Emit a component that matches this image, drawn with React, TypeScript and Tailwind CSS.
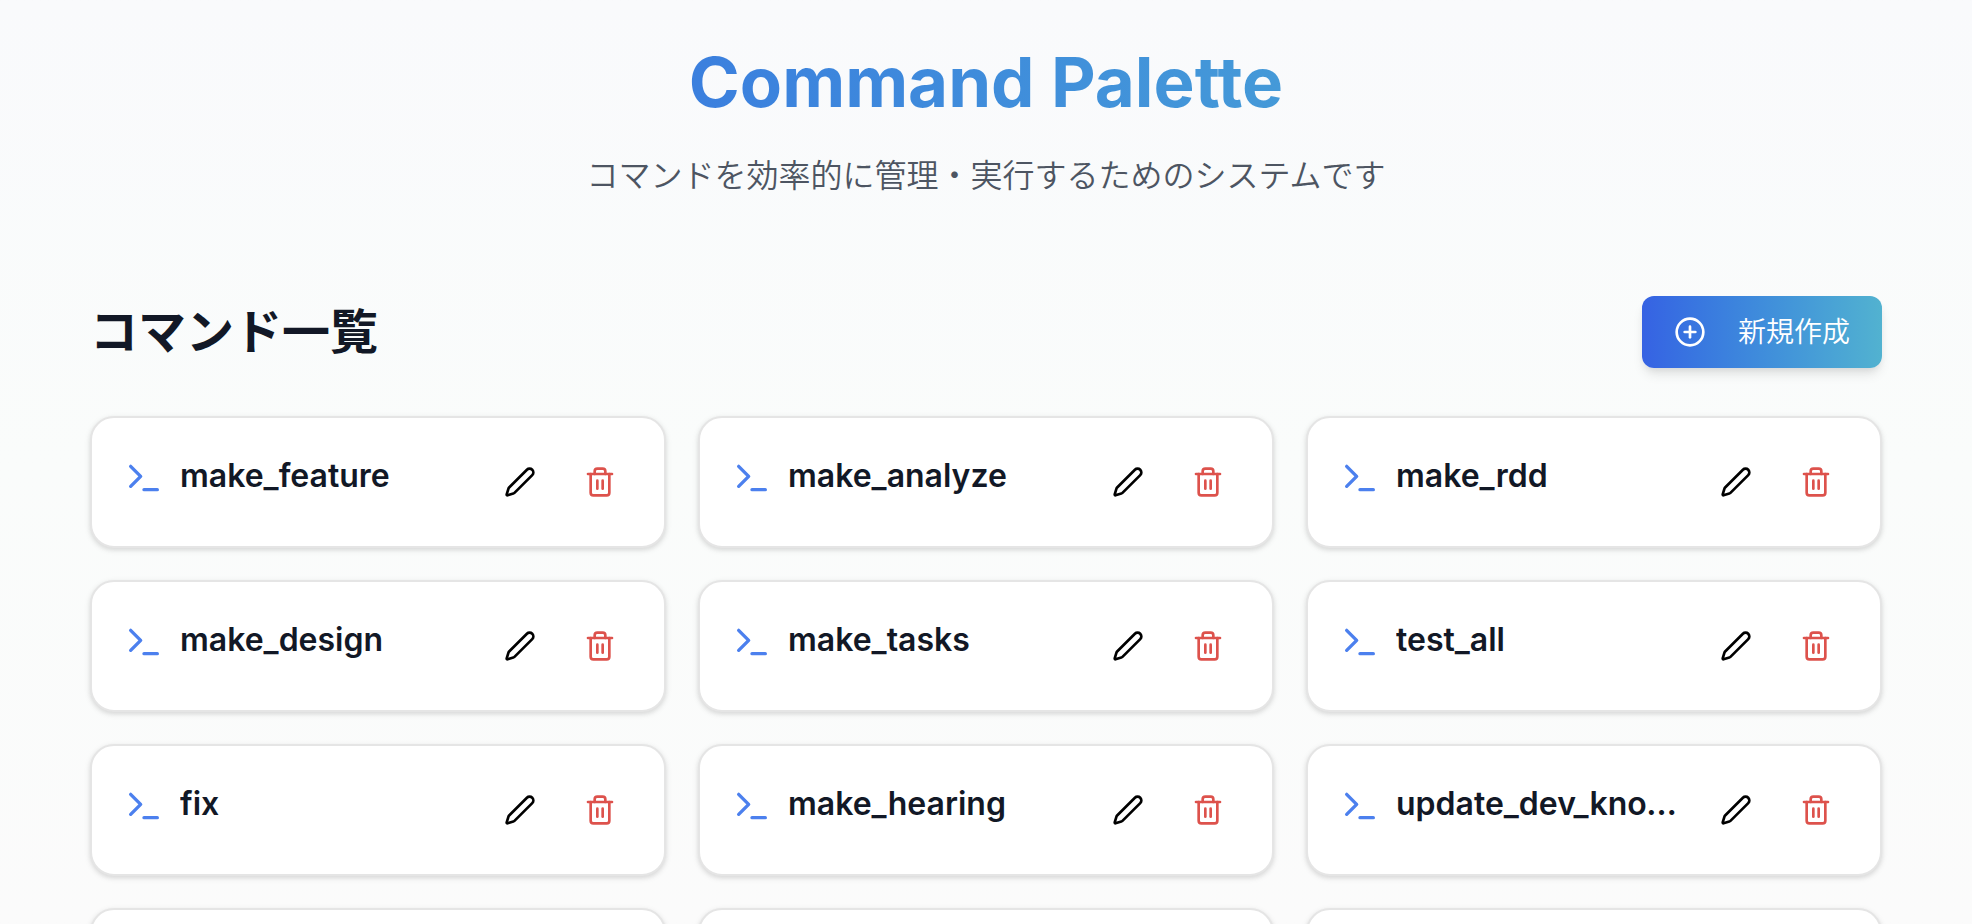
import { CirclePlus, Pen, Terminal, Trash2 } from "lucide-react";

const commands = [
  "make_feature",
  "make_analyze",
  "make_rdd",
  "make_design",
  "make_tasks",
  "test_all",
  "fix",
  "make_hearing",
  "update_dev_knowledge",
  "commit",
  "review",
  "refactor",
];

function CommandCard({ name }: { name: string }) {
  return (
    <li className="flex items-start justify-between gap-4 rounded-3xl border-2 border-[#e5e5e5] bg-white p-8 shadow-[0_2px_6px_rgba(0,0,0,0.1),0_2px_4px_rgba(0,0,0,0.06)]">
      <div className="flex min-w-0 items-start gap-4">
        <Terminal className="mt-2 size-10 shrink-0 text-[#4c80ee]" />
        <h3 className="truncate text-[32px] leading-[52px] font-semibold text-[#121826]">{name}</h3>
      </div>
      <div className="flex shrink-0 gap-4">
        <button type="button" aria-label={`${name} を編集`} className="flex size-16 items-center justify-center rounded-xl text-black">
          <Pen className="size-8" />
        </button>
        <button type="button" aria-label={`${name} を削除`} className="flex size-16 items-center justify-center rounded-xl text-[#dd524c]">
          <Trash2 className="size-8" />
        </button>
      </div>
    </li>
  );
}

export default function App() {
  return (
    <div className="h-screen overflow-hidden bg-linear-to-b from-[#f9fafc] via-[#fafcfb] to-[#fbfbfb] px-8 pt-10 font-['Inter','Noto_Sans_CJK_JP',sans-serif]">
      <div className="mx-auto max-w-[1792px]">
        <header className="text-center">
          <h1 className="bg-linear-to-r from-[#3662e3] to-[#52b2d0] bg-clip-text text-[69px] leading-[84px] font-bold text-transparent">
            Command Palette
          </h1>
          <p className="mt-6 text-[32px] leading-14 font-[350] text-[#4d5562]">
            コマンドを効率的に管理・実行するためのシステムです
          </p>
        </header>
        <main className="mt-23">
          <div className="flex items-center justify-between">
            <h2 className="text-5xl leading-16 font-bold text-[#121826]">コマンド一覧</h2>
            <button
              type="button"
              className="flex h-18 items-center gap-8 rounded-xl bg-linear-to-r from-[#3662e3] to-[#52b2d0] px-8 text-[28px] font-[350] text-white shadow-[0_8px_12px_-2px_rgba(0,0,0,0.1),0_4px_8px_-4px_rgba(0,0,0,0.1)]"
            >
              <CirclePlus className="size-8" />
              新規作成
            </button>
          </div>
          <ul className="mt-12 grid grid-cols-3 gap-8">
            {commands.map((name) => (
              <CommandCard key={name} name={name} />
            ))}
          </ul>
        </main>
      </div>
    </div>
  );
}
